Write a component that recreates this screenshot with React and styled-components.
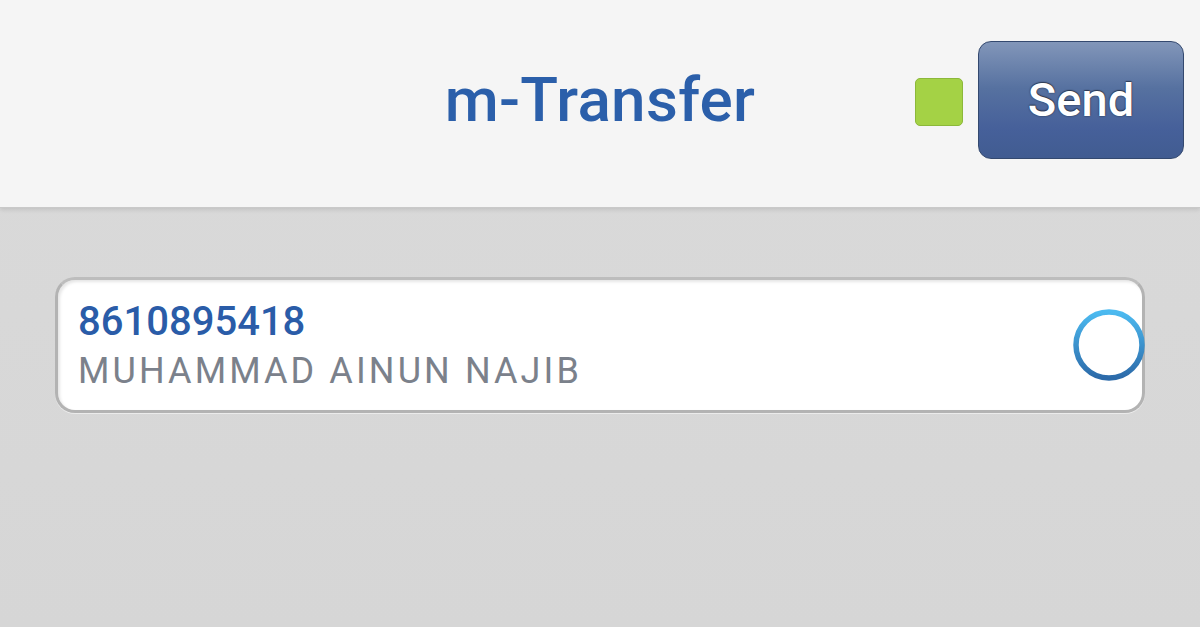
import styled, { createGlobalStyle } from "styled-components";

const GlobalStyle = createGlobalStyle`
  html, body {
    margin: 0;
    padding: 0;
    background: #d8d8d8;
  }
  body {
    font-family: Roboto, "Liberation Sans", sans-serif;
  }
`;

const Page = styled.div`
  width: 1200px;
  height: 627px;
  overflow: hidden;
  background: linear-gradient(#dadada, #d6d6d6);
`;

const Header = styled.header`
  height: 207px;
  display: grid;
  grid-template-columns: 1fr auto 1fr;
  align-items: center;
  background: #f5f5f5;
  box-shadow: 0 1px 0 #c9c9c9, 0 3px 4px rgba(0, 0, 0, 0.1);
  position: relative;
`;

const Title = styled.h1`
  grid-column: 2;
  margin: 0 0 8px;
  font-size: 62px;
  font-weight: 500;
  color: #2b5faa;
  letter-spacing: 0.3px;
`;

const Actions = styled.div`
  grid-column: 3;
  justify-self: end;
  display: flex;
  align-items: center;
  gap: 15px;
  padding-right: 16px;
  margin-bottom: 8px;
`;

const StatusDot = styled.span`
  width: 46px;
  height: 46px;
  border-radius: 5px;
  background: #a4d245;
  border: 1px solid #8cb83a;
  margin-top: 4px;
`;

const SendButton = styled.button`
  width: 206px;
  height: 118px;
  border-radius: 13px;
  border: 1px solid #34496f;
  background: linear-gradient(#8296b9 0%, #5671a0 40%, #46609a 75%, #415c91 100%);
  color: #fff;
  font-family: Roboto, "Liberation Sans", sans-serif;
  font-size: 47px;
  font-weight: 500;
  text-shadow: 0 0 2px rgba(0, 0, 0, 0.6), 0 -1px 1px rgba(0, 0, 0, 0.4);
  padding: 0;
`;

const Body = styled.main`
  padding: 70px 55px 0;
`;

const AccountCard = styled.div`
  position: relative;
  height: 136px;
  box-sizing: border-box;
  border-radius: 20px;
  background: #fff;
  border: 3px solid #b3b3b3;
  border-top-color: #bdbdbd;
  box-shadow: inset 2px 2px 3px rgba(0, 0, 0, 0.1), 0 1px 0 rgba(255, 255, 255, 0.5);
  padding: 18px 20px 0;
  display: flex;
  flex-direction: column;
`;

const AccountNumber = styled.div`
  font-size: 40px;
  font-weight: 500;
  color: #2a5ca8;
  line-height: 48px;
`;

const AccountName = styled.div`
  font-size: 36px;
  color: #7b818b;
  letter-spacing: 3.1px;
  line-height: 50px;
`;

const Radio = styled.svg`
  position: absolute;
  right: -4px;
  top: 28px;
`;

export default function App() {
  return (
    <Page>
      <GlobalStyle />
      <Header>
        <Title>m-Transfer</Title>
        <Actions>
          <StatusDot />
          <SendButton type="button">Send</SendButton>
        </Actions>
      </Header>
      <Body>
        <AccountCard>
          <AccountNumber>8610895418</AccountNumber>
          <AccountName>MUHAMMAD AINUN NAJIB</AccountName>
          <Radio width="74" height="74" viewBox="0 0 74 74">
            <defs>
              <linearGradient id="ring" x1="0" y1="0" x2="0" y2="1">
                <stop offset="0" stopColor="#4cbaf0" />
                <stop offset="1" stopColor="#2c6aa9" />
              </linearGradient>
            </defs>
            <circle cx="37" cy="37" r="33" fill="#fff" stroke="url(#ring)" strokeWidth="5.5" />
          </Radio>
        </AccountCard>
      </Body>
    </Page>
  );
}
